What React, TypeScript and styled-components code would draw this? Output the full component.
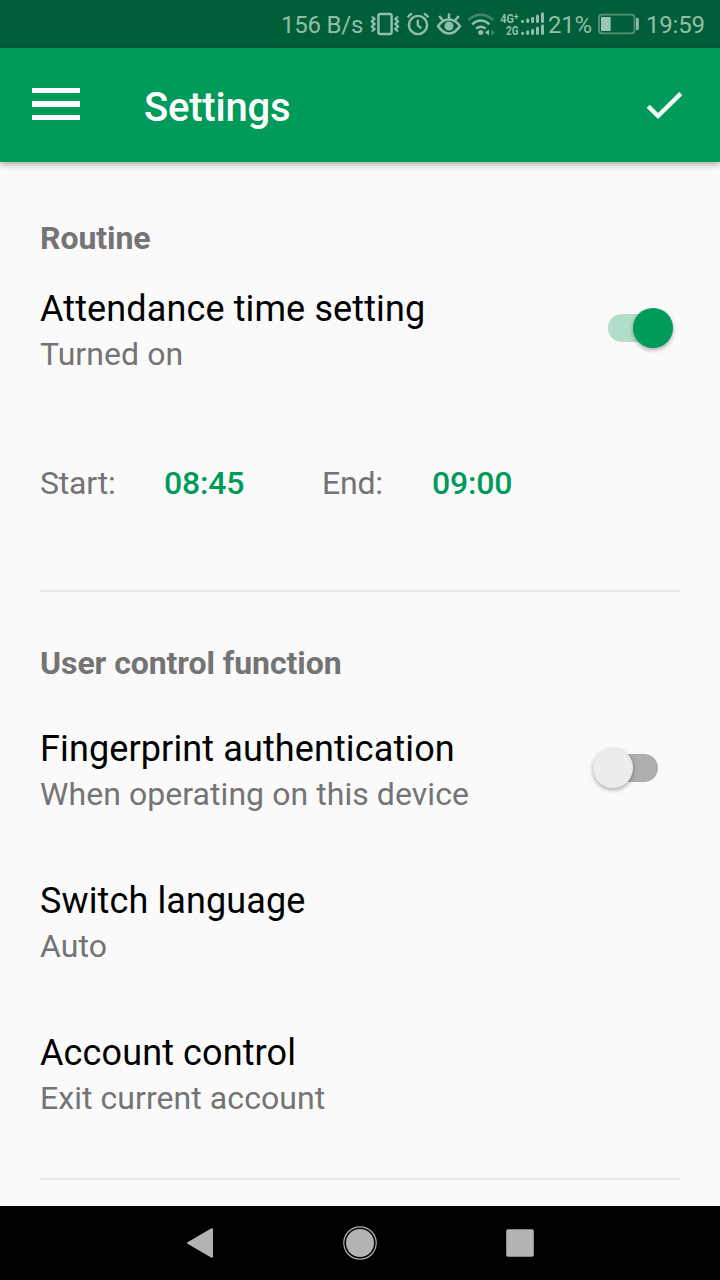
import React from 'react';
import styled, { createGlobalStyle } from 'styled-components';

const GlobalStyle = createGlobalStyle`
  * { box-sizing: border-box; }
  body { margin: 0; background: #fafafa; font-family: Roboto, sans-serif; }
`;

const Screen = styled.div`
  width: 720px;
  height: 1280px;
  display: flex;
  flex-direction: column;
  background: #fafafa;
  overflow: hidden;
`;

const StatusBar = styled.header`
  height: 48px;
  flex: none;
  display: flex;
  align-items: center;
  background: #005f38;
  color: #92bda8;
  font-size: 24px;
  line-height: 48px;
  letter-spacing: -0.2px;
  padding: 2px 0 0 281px;
  white-space: nowrap;
`;

const StatusText = styled.span<{ $width: number }>`
  width: ${(p) => p.$width}px;
  flex: none;
`;

const StatusIcons = styled.svg`
  flex: none;
  display: block;
  margin-top: -2px;
  letter-spacing: 0;
`;

const AppBar = styled.div`
  height: 114px;
  flex: none;
  display: flex;
  align-items: center;
  padding: 0 32px;
  background: #009b5a;
  box-shadow: 0 2px 7px rgba(0, 0, 0, 0.36);
  z-index: 1;
`;

const MenuButton = styled.button`
  width: 48px;
  height: 33px;
  padding: 0;
  border: 0;
  background: none;
  display: flex;
  flex-direction: column;
  justify-content: space-between;
  margin-bottom: 2px;
`;

const MenuBar = styled.span`
  height: 5.4px;
  background: #fff;
`;

const Title = styled.h1`
  flex: 1;
  margin: 6px 0 0 64px;
  font-size: 40px;
  line-height: 48px;
  font-weight: 500;
  letter-spacing: -0.2px;
  color: #fff;
`;

const ConfirmIcon = styled.svg`
  flex: none;
`;

const Content = styled.main`
  flex: 1;
  min-height: 0;
  padding: 54px 40px 0;
`;

const Heading = styled.h2`
  margin: 0;
  font-size: 32px;
  line-height: 44px;
  font-weight: 700;
  letter-spacing: -0.07px;
  color: #747474;
`;

const Item = styled.div<{ $gap: number }>`
  display: flex;
  justify-content: space-between;
  align-items: flex-start;
  height: 89px;
  margin-top: ${(p) => p.$gap}px;
`;

const ItemTitle = styled.div`
  font-size: 36px;
  line-height: 44px;
  letter-spacing: 0.12px;
  color: #000;
`;

const ItemNote = styled.div`
  margin-top: 1px;
  font-size: 32px;
  line-height: 44px;
  letter-spacing: 0.06px;
  color: #747474;
`;

const Track = styled.div<{ $on?: boolean }>`
  display: flex;
  align-items: center;
  justify-content: ${(p) => (p.$on ? 'flex-end' : 'flex-start')};
  width: 65px;
  height: 28px;
  margin: 27px ${(p) => (p.$on ? 7 : 22)}px 0 0;
  border-radius: 14px;
  background: ${(p) => (p.$on ? '#b0dec9' : '#aeaeae')};
`;

const Thumb = styled.div<{ $on?: boolean }>`
  flex: none;
  width: 40px;
  height: 40px;
  border-radius: 50%;
  background: ${(p) => (p.$on ? '#009b5a' : '#ececec')};
  box-shadow: 0 2px 4px rgba(0, 0, 0, 0.32);
`;

const TimeRow = styled.div`
  display: flex;
  margin: 85px 0;
  font-size: 32px;
  line-height: 44px;
  letter-spacing: -0.2px;
`;

const TimeLabel = styled.span<{ $width: number }>`
  width: ${(p) => p.$width}px;
  color: #747474;
`;

const TimeValue = styled.span<{ $width: number }>`
  width: ${(p) => p.$width}px;
  color: #009b5a;
  font-weight: 500;
`;

const Divider = styled.hr<{ $top: number; $bottom: number }>`
  height: 2px;
  border: 0;
  margin: ${(p) => p.$top}px 0 ${(p) => p.$bottom}px;
  background: #e6e6e6;
`;

const NavBar = styled.nav`
  height: 74px;
  flex: none;
  display: flex;
  justify-content: space-between;
  align-items: center;
  padding: 0 180px;
  background: #000;
`;

const NavIcon = styled.svg`
  display: block;
`;

function Setting({ title, note, gap, on }: { title: string; note: string; gap: number; on?: boolean }) {
  return (
    <Item $gap={gap}>
      <div>
        <ItemTitle>{title}</ItemTitle>
        <ItemNote>{note}</ItemNote>
      </div>
      {on !== undefined && (
        <Track $on={on} role="switch" aria-checked={on}>
          <Thumb $on={on} />
        </Track>
      )}
    </Item>
  );
}

function SignalBars({ y }: { y: number }) {
  return (
    <g strokeWidth="3" strokeLinecap="round">
      <path d={`M522.6 ${y - 1.8}v.4`} />
      <path d={`M527.7 ${y - 3.2}v1.7`} />
      <path d={`M532.6 ${y - 4.8}v3.3`} />
      <path d={`M537.5 ${y - 6.9}v5.4`} />
      <path d={`M542.5 ${y - 9.2}v7.7`} />
    </g>
  );
}

function SystemIcons() {
  return (
    <StatusIcons width="178" height="48" viewBox="370 0 178 48" fill="none" stroke="#92bda8">
      {/* vibrate */}
      <rect x="378.4" y="14" width="13.2" height="20" rx="2" strokeWidth="2.5" />
      <path d="M371.9 16.5l2.6 2.4-2.6 2.5 2.6 2.5-2.6 2.5 2.6 2.5-2.6 2.6M398 16.5l-2.6 2.4 2.6 2.5-2.6 2.5 2.6 2.5-2.6 2.5 2.6 2.6" strokeWidth="2.3" />
      {/* alarm */}
      <circle cx="418" cy="25" r="9.1" strokeWidth="2.4" />
      <path d="M417.8 19.8v5.4l3.4 3.3" strokeWidth="2.3" />
      <path d="M407.8 17.3q1.4-2.5 4.2-3.6M428.2 17.3q-1.4-2.5-4.2-3.6" strokeWidth="2.4" />
      {/* eye comfort */}
      <path d="M438.1 26c6.2-8.6 15.6-8.6 21.8 0-6.2 10-15.6 10-21.8 0z" strokeWidth="2.5" />
      <circle cx="449" cy="26" r="4.5" fill="#92bda8" stroke="none" />
      <path d="M449 13.6v5.4M439.2 16l3.6 4.2M458.8 16l-3.6 4.2" strokeWidth="2.5" />
      {/* wifi */}
      <path d="M468.3 20q12.5-10.3 25 0" strokeWidth="2.4" stroke="#3f8767" />
      <path d="M472.2 24.4q8.6-7.6 17.2 0M476.1 28.7q4.8-4 9.6 0" strokeWidth="2.4" />
      <circle cx="480.7" cy="32.4" r="2.5" fill="#92bda8" stroke="none" />
      <path d="M489 29.5v6l-4.2-3z" fill="#92bda8" stroke="none" />
      <path d="M491 29.5v6l4-3z" fill="#3f8767" stroke="none" />
      {/* mobile networks */}
      <g fill="#92bda8" stroke="none" fontFamily="Roboto, sans-serif" fontWeight="700">
        <text x="500.3" y="22.6" fontSize="13.4" textLength="18.2" lengthAdjust="spacingAndGlyphs">
          4G<tspan fontSize="10" dy="-3">+</tspan>
        </text>
        <text x="506" y="34.9" fontSize="13.4" textLength="12.5" lengthAdjust="spacingAndGlyphs">2G</text>
      </g>
      <SignalBars y={23} />
      <SignalBars y={35} />
    </StatusIcons>
  );
}

export default function App() {
  return (
    <Screen>
      <GlobalStyle />
      <StatusBar>
        <StatusText $width={89}>156 B/s</StatusText>
        <SystemIcons />
        <StatusText $width={50}>21%</StatusText>
        <StatusIcons width="48" height="48" viewBox="598 0 48 48">
          <rect x="599" y="14.7" width="35.5" height="18.6" rx="3" fill="none" stroke="#549376" strokeWidth="1.8" />
          <rect x="601" y="17" width="9.7" height="14" fill="#a0c4b3" />
          <rect x="636" y="18" width="2.8" height="12" rx="1" fill="#92bda8" />
        </StatusIcons>
        <StatusText $width={60}>19:59</StatusText>
      </StatusBar>
      <AppBar>
        <MenuButton aria-label="Menu">
          <MenuBar />
          <MenuBar />
          <MenuBar />
        </MenuButton>
        <Title>Settings</Title>
        <ConfirmIcon width="48" height="48" viewBox="0 0 48 48" fill="none" stroke="#f0faf5" strokeWidth="4.4">
          <path d="M8.2 25.2L18 35L40.8 12.6" />
        </ConfirmIcon>
      </AppBar>
      <Content>
        <Heading>Routine</Heading>
        <Setting title="Attendance time setting" note="Turned on" gap={27} on />
        <TimeRow>
          <TimeLabel $width={124}>Start:</TimeLabel>
          <TimeValue $width={158}>08:45</TimeValue>
          <TimeLabel $width={110}>End:</TimeLabel>
          <TimeValue $width={100}>09:00</TimeValue>
        </TimeRow>
        <Divider $top={0} $bottom={49} />
        <Heading>User control function</Heading>
        <Setting title="Fingerprint authentication" note="When operating on this device" gap={42} on={false} />
        <Setting title="Switch language" note="Auto" gap={63} />
        <Setting title="Account control" note="Exit current account" gap={63} />
        <Divider $top={58} $bottom={0} />
      </Content>
      <NavBar>
        <NavIcon width="40" height="40" viewBox="0 0 40 40">
          <path d="M8 20L32 6.2V33.8Z" fill="#b3b3b3" stroke="#b3b3b3" strokeWidth="2" strokeLinejoin="round" />
        </NavIcon>
        <NavIcon width="40" height="40" viewBox="0 0 40 40">
          <circle cx="20" cy="20" r="16.2" fill="none" stroke="#b3b3b3" strokeWidth="1.2" />
          <circle cx="20" cy="20" r="14" fill="#b3b3b3" />
        </NavIcon>
        <NavIcon width="40" height="40" viewBox="0 0 40 40">
          <rect x="6.2" y="6.2" width="27.6" height="27.6" rx="1.8" fill="#b3b3b3" />
        </NavIcon>
      </NavBar>
    </Screen>
  );
}
